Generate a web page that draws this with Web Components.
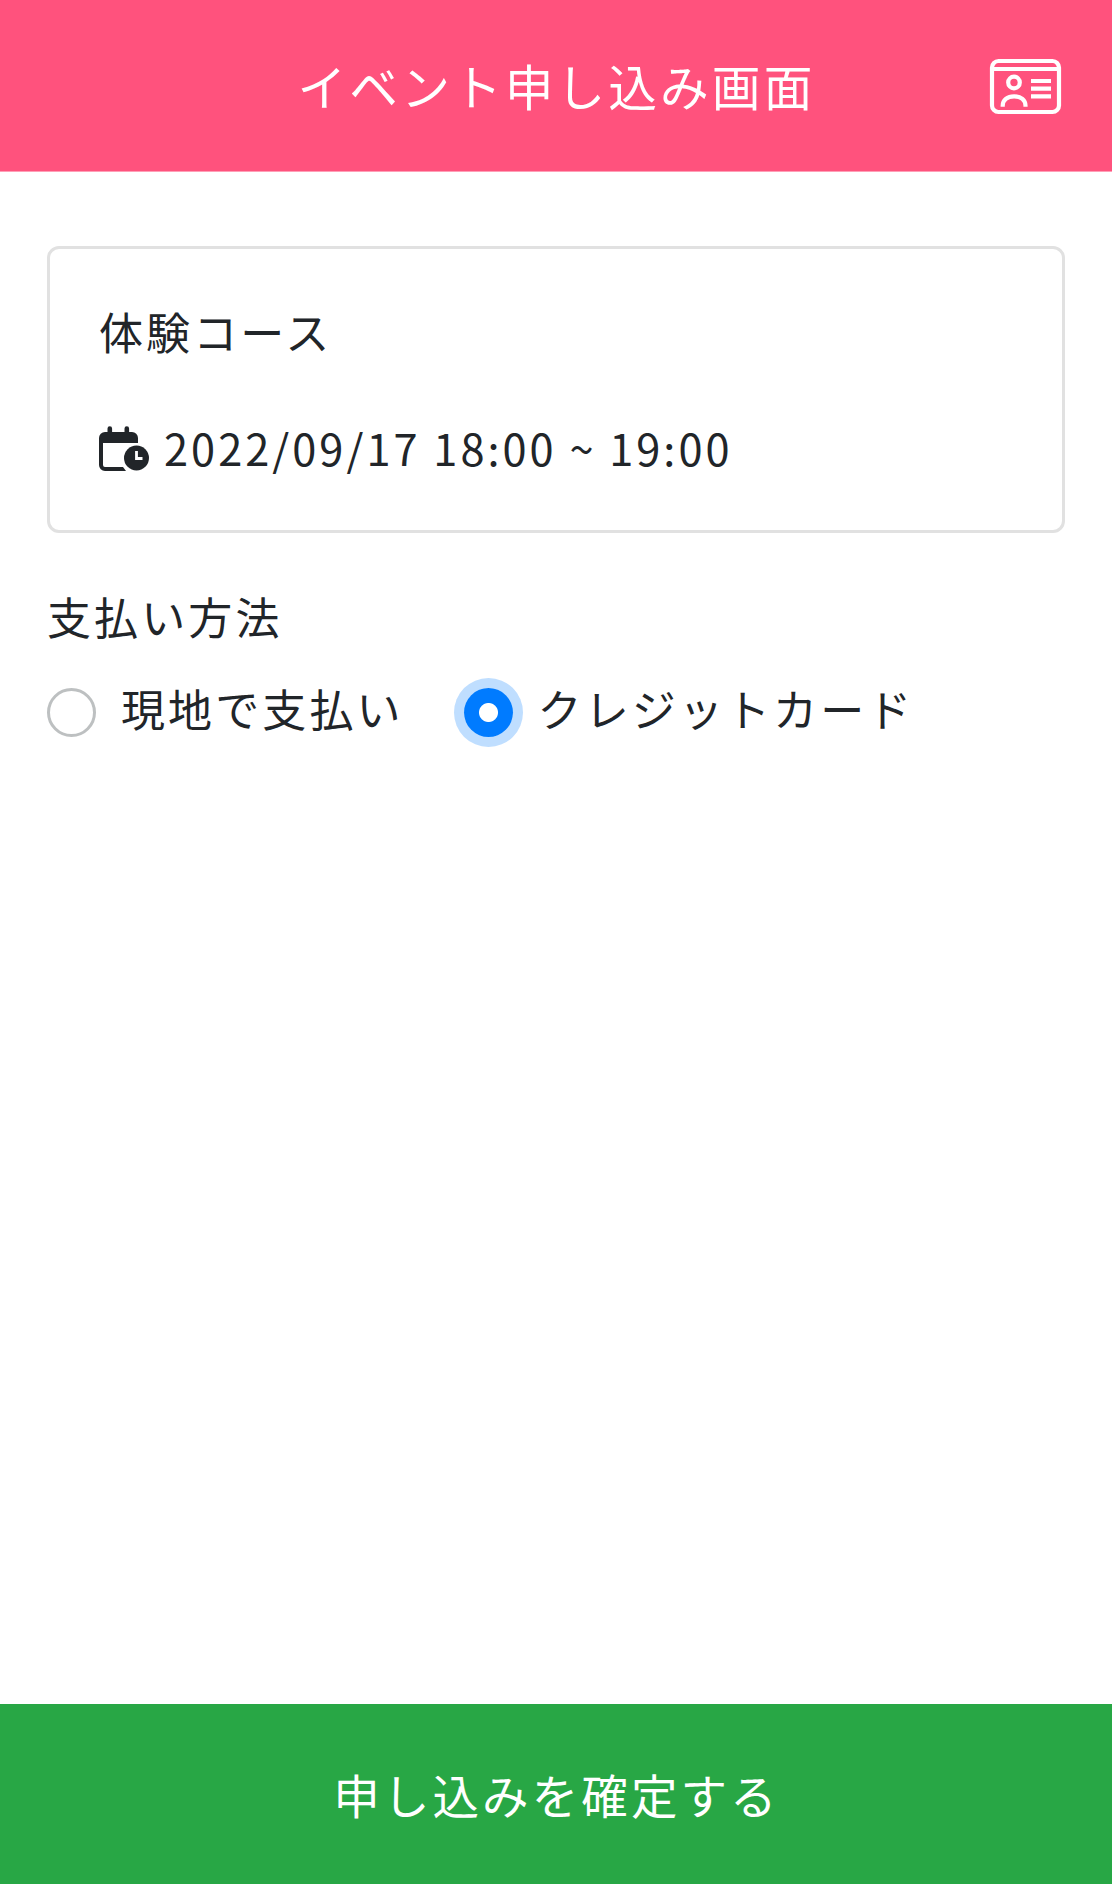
<!DOCTYPE html>
<html lang="ja">
  <head>
    <meta charset="UTF-8" />
    <meta name="viewport" content="width=device-width, initial-scale=1.0" />
    <title>イベント申し込み画面</title>
    <style>
      body {
        margin: 0;
        min-height: 1884px;
        display: flex;
        flex-direction: column;
        background: #fff;
        color: #212529;
        font-family: "Noto Sans CJK JP", sans-serif;
        font-size: 44px;
        line-height: 64px;
        letter-spacing: 3.1px;
      }

      main {
        flex: 1;
        padding: 74px 47px 0;
      }
    </style>
  </head>
  <body>
    <template id="app-header">
      <style>
        :host {
          display: grid;
          grid-template-columns: 1fr auto 1fr;
          align-items: center;
          height: 172px;
          padding: 0 50px;
          border-bottom: 1px solid #ff9fb7;
          box-sizing: border-box;
          background: #ff527d;
          color: #fff;
        }
        h1 {
          grid-column: 2;
          margin: 0 0 1px 1px;
          font-size: 48.7px;
          font-weight: 400;
        }
        svg {
          justify-self: end;
          width: 73px;
          height: 58px;
          margin-top: 3px;
          fill: none;
          stroke: #fff;
          stroke-width: 4.2;
        }
      </style>
      <h1><slot></slot></h1>
      <svg viewBox="0 0 73 58">
        <rect x="3" y="3" width="67" height="51" rx="6.5" />
        <path d="M3 11h67" />
        <circle cx="25" cy="24.5" r="5.8" />
        <path d="M13.7 48.7v-1c0-5.5 4.5-9.4 11.4-9.4s11.4 3.9 11.4 9.4v1" />
        <path d="M42 23h20M42 30.7h20M42 38.3h20" />
      </svg>
    </template>

    <template id="event-card">
      <style>
        :host {
          display: flex;
          flex-direction: column;
          gap: 52px;
          height: 287px;
          box-sizing: border-box;
          padding: 50px 49px 0;
          border: 3px solid #e1e1e1;
          border-radius: 12px;
        }
        .date {
          display: flex;
          align-items: center;
          gap: 15px;
          font-size: 43.3px;
          letter-spacing: 3.04px;
        }
        svg {
          width: 50px;
          height: 46px;
          margin-top: 4px;
          fill: currentColor;
        }
      </style>
      <div><slot name="course"></slot></div>
      <div class="date">
        <svg viewBox="0 0 50 46">
          <path d="M8.500 6V2.500a2.300 2.300 0 0 1 4.600 0V6h12.400V2.500a2.300 2.300 0 0 1 4.600 0V6H33a6 6 0 0 1 6 6v5H4v22a2 2 0 0 0 2 2h18l3 4H6a6 6 0 0 1-6-6V12a6 6 0 0 1 6-6z" />
          <circle cx="37.5" cy="32" r="12.5" />
          <path d="M37.5 25v7.500h6" fill="none" stroke="#fff" stroke-width="2.8" />
        </svg>
        <slot name="date"></slot>
      </div>
    </template>

    <template id="payment-method">
      <style>
        :host {
          display: block;
          margin-top: 51px;
        }
        .options {
          display: flex;
          gap: 60px;
          margin-top: 28px;
        }
      </style>
      <div><slot name="label"></slot></div>
      <div class="options"><slot></slot></div>
    </template>

    <template id="radio-option">
      <style>
        :host {
          display: flex;
          gap: 25px;
        }
        .mark {
          width: 49px;
          height: 49px;
          margin-top: 12px;
          box-sizing: border-box;
          border: 3px solid #bdc0c1;
          border-radius: 50%;
        }
        :host([checked]) .mark {
          border: 0;
          background: radial-gradient(circle, #fff 9px, #007bff 10px);
          box-shadow: 0 0 0 10px #bfdeff;
        }
      </style>
      <span class="mark"></span>
      <slot></slot>
    </template>

    <template id="submit-bar">
      <style>
        :host {
          display: block;
        }
        button {
          display: block;
          width: 100%;
          height: 180px;
          padding: 0 0 1px 1px;
          border: 0;
          background: #28a745;
          color: #fff;
          font: inherit;
          font-size: 46.5px;
          letter-spacing: inherit;
        }
      </style>
      <button type="button"><slot></slot></button>
    </template>

    <app-header>イベント申し込み画面</app-header>
    <main>
      <event-card>
        <span slot="course">体験コース</span>
        <span slot="date">2022/09/17 18:00 ~ 19:00</span>
      </event-card>
      <payment-method>
        <span slot="label">支払い方法</span>
        <radio-option>現地で支払い</radio-option>
        <radio-option checked>クレジットカード</radio-option>
      </payment-method>
    </main>
    <submit-bar>申し込みを確定する</submit-bar>

    <script>
      class TemplateElement extends HTMLElement {
        constructor() {
          super();

          const tmp = document.getElementById(this.localName);
          this.attachShadow({ mode: "open" });
          this.shadowRoot.appendChild(tmp.content.cloneNode(true));
        }
      }

      customElements.define("app-header", class extends TemplateElement {});
      customElements.define("event-card", class extends TemplateElement {});
      customElements.define("payment-method", class extends TemplateElement {});
      customElements.define("radio-option", class extends TemplateElement {});
      customElements.define("submit-bar", class extends TemplateElement {});
    </script>
  </body>
</html>
